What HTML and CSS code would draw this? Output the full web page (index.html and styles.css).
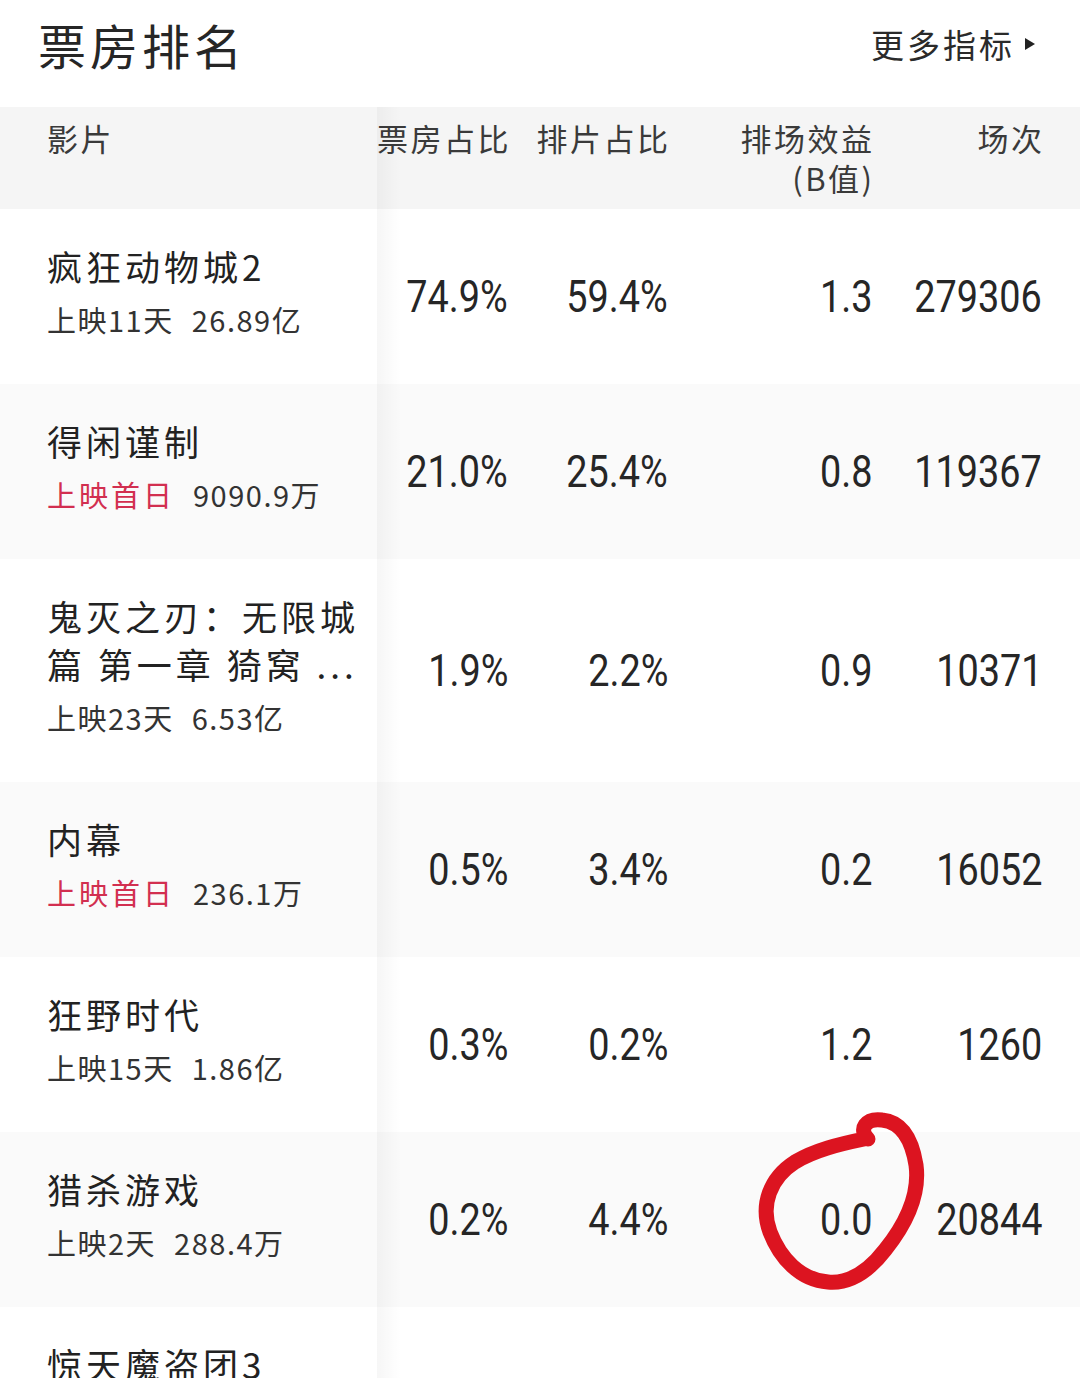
FILE: index.html
```html
<!DOCTYPE html>
<html lang="zh-CN">
<head>
<meta charset="utf-8">
<title>票房排名</title>
<link rel="stylesheet" href="styles.css">
</head>
<body>
<div class="page">
  <header class="topbar">
    <h1 class="title">票房排名</h1>
    <div class="more">更多指标<svg class="tri" width="12" height="14" viewBox="0 0 12 14"><polygon points="1,1 11,7 1,13" fill="#222"/></svg></div>
  </header>

  <div class="table">
    <div class="row head">
      <div class="cell name-cell">影片</div>
      <div class="cell hd">票房占比</div>
      <div class="cell hd">排片占比</div>
      <div class="cell hd">排场效益<br>(B值)</div>
      <div class="cell hd">场次</div>
    </div>

    <div class="row">
      <div class="cell name-cell"><div class="name">疯狂动物城2</div><div class="sub"><span>上映11天</span><span class="gross">26.89亿</span></div></div>
      <div class="cell num"><span class="v">74.9%</span></div><div class="cell num"><span class="v">59.4%</span></div><div class="cell num"><span class="v">1.3</span></div><div class="cell num"><span class="v">279306</span></div>
    </div>

    <div class="row alt">
      <div class="cell name-cell"><div class="name">得闲谨制</div><div class="sub"><span class="first">上映首日</span><span class="gross">9090.9万</span></div></div>
      <div class="cell num"><span class="v">21.0%</span></div><div class="cell num"><span class="v">25.4%</span></div><div class="cell num"><span class="v">0.8</span></div><div class="cell num"><span class="v">119367</span></div>
    </div>

    <div class="row">
      <div class="cell name-cell"><div class="name">鬼灭之刃：无限城篇 第一章 猗窝 ...</div><div class="sub"><span>上映23天</span><span class="gross">6.53亿</span></div></div>
      <div class="cell num"><span class="v">1.9%</span></div><div class="cell num"><span class="v">2.2%</span></div><div class="cell num"><span class="v">0.9</span></div><div class="cell num"><span class="v">10371</span></div>
    </div>

    <div class="row alt">
      <div class="cell name-cell"><div class="name">内幕</div><div class="sub"><span class="first">上映首日</span><span class="gross">236.1万</span></div></div>
      <div class="cell num"><span class="v">0.5%</span></div><div class="cell num"><span class="v">3.4%</span></div><div class="cell num"><span class="v">0.2</span></div><div class="cell num"><span class="v">16052</span></div>
    </div>

    <div class="row">
      <div class="cell name-cell"><div class="name">狂野时代</div><div class="sub"><span>上映15天</span><span class="gross">1.86亿</span></div></div>
      <div class="cell num"><span class="v">0.3%</span></div><div class="cell num"><span class="v">0.2%</span></div><div class="cell num"><span class="v">1.2</span></div><div class="cell num"><span class="v">1260</span></div>
    </div>

    <div class="row alt">
      <div class="cell name-cell"><div class="name">猎杀游戏</div><div class="sub"><span>上映2天</span><span class="gross">288.4万</span></div></div>
      <div class="cell num"><span class="v">0.2%</span></div><div class="cell num"><span class="v">4.4%</span></div><div class="cell num"><span class="v">0.0</span></div><div class="cell num"><span class="v">20844</span></div>
    </div>

    <div class="row">
      <div class="cell name-cell"><div class="name">惊天魔盗团3</div><div class="sub"><span>上映9天</span><span class="gross">1.12亿</span></div></div>
      <div class="cell num"><span class="v">0.1%</span></div><div class="cell num"><span class="v">2.4%</span></div><div class="cell num"><span class="v">0.7</span></div><div class="cell num"><span class="v">2744</span></div>
    </div>
  </div>

  <svg class="mark" width="1080" height="1378" viewBox="0 0 1080 1378">
    <path d="M868,1139 C858,1129 866,1118 882,1120 C902,1122 912,1140 916,1165 C920,1195 905,1225 885,1250 C868,1272 850,1284 828,1282 C800,1280 780,1258 770,1232 C760,1205 770,1178 795,1162 C815,1150 840,1144 864,1139" fill="none" stroke="#dc1420" stroke-width="15" stroke-linecap="round" stroke-linejoin="round"/>
  </svg>
</div>
</body>
</html>
```

FILE: styles.css
```css
html, body {
  margin: 0;
  padding: 0;
  background: #ffffff;
}
body {
  font-family: "Noto Sans CJK SC", "Noto Sans", sans-serif;
  color: #222222;
}
.page {
  position: relative;
  width: 1080px;
  height: 1378px;
  overflow: hidden;
}
.topbar {
  height: 88px;
  padding: 0 44px 19px 38px;
  display: flex;
  align-items: center;
  justify-content: space-between;
}
.title {
  margin: 0;
  font-size: 48px;
  font-weight: 400;
  letter-spacing: 4px;
  color: #262626;
  line-height: 1;
}
.more {
  display: flex;
  align-items: center;
  font-size: 33px;
  letter-spacing: 3px;
  color: #2a2a2a;
  line-height: 1;
}
.tri {
  margin-left: 9px;
}
.table {
  position: relative;
}
.table::after {
  content: "";
  position: absolute;
  left: 377px;
  top: 0;
  bottom: 0;
  width: 24px;
  background: linear-gradient(to right, rgba(0,0,0,0.035), rgba(0,0,0,0));
  pointer-events: none;
}
.row {
  display: grid;
  grid-template-columns: 377px 131px 160px 204px 1fr;
  padding-right: 38px;
  align-items: center;
}
.row.alt {
  background: #fafafa;
}
.row.head {
  background: #f5f5f5;
  height: 102px;
  align-items: start;
  box-sizing: border-box;
  padding-top: 11px;
  font-size: 31px;
  line-height: 40px;
  color: #3a3a3a;
}
.row.head .name-cell {
  padding: 0 0 0 47px;
  letter-spacing: 2.5px;
}
.hd {
  text-align: right;
  font-size: 31px;
  line-height: 40px;
  letter-spacing: 2.5px;
  margin-right: -2.5px;
  color: #3a3a3a;
  white-space: nowrap;
}
.name-cell {
  padding: 33px 0 39px 47px;
}
.name {
  font-size: 35px;
  line-height: 48px;
  letter-spacing: 4px;
  color: #222222;
  padding-right: 10px;
}
.sub {
  margin-top: 3px;
  font-size: 29px;
  line-height: 52px;
  letter-spacing: 1.5px;
  color: #333333;
}
.sub .first {
  color: #d22f50;
  letter-spacing: 3px;
}
.gross {
  margin-left: 18px;
}
.num {
  text-align: right;
  font-family: "Roboto", "Liberation Sans", sans-serif;
  font-size: 45px;
  line-height: 60px;
  color: #262626;
}
.v {
  display: inline-block;
  transform: scaleX(0.84);
  transform-origin: right center;
}
.mark {
  position: absolute;
  left: 0;
  top: 0;
  pointer-events: none;
}
```
